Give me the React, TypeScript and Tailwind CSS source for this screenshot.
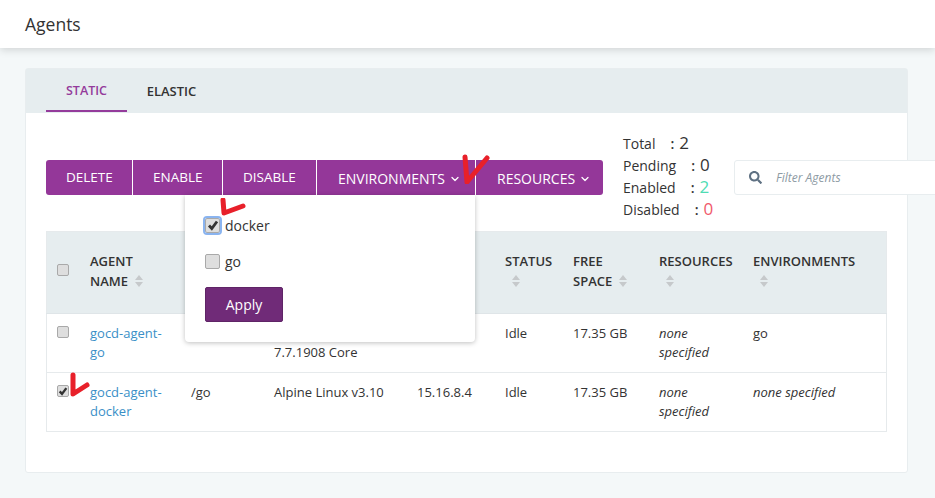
import React from 'react';
import { ChevronDown } from 'lucide-react';
import { FaSearch } from 'react-icons/fa';

const font = { fontFamily: '"Open Sans", sans-serif' };

const SortIcon = () => (
    <svg viewBox="0 0 8 12" className="inline-block w-[8px] h-[12px] ml-[7px] align-[-1px]">
        <path d="M4 0 L8 5 H0 Z M0 7 H8 L4 12 Z" fill="#c6c9cb" />
    </svg>
);

const Checkbox = ({ checked, size = 'sm', focus }: { checked?: boolean; size?: 'sm' | 'lg'; focus?: boolean }) => (
    <span
        className={`relative inline-flex items-center justify-center border border-[#a9a9a9] rounded-[2px] bg-[#dedede] ${size === 'lg' ? 'w-[15px] h-[15px]' : 'w-[12px] h-[12px]'} ${focus ? 'outline-2 outline-[#8ab4f0]' : ''}`}
    >
        {checked && (
            <svg viewBox="0 0 12 12" className={size === 'lg' ? 'w-[12px] h-[12px]' : 'w-[10px] h-[10px]'}>
                <path d="M2 6.5 L4.8 9.5 L10 2.5" fill="none" stroke="#333" strokeWidth="2.8" />
            </svg>
        )}
    </span>
);

const RedMark = ({ className, d }: { className: string; d: string }) => (
    <svg viewBox="0 0 30 30" className={`absolute ${className}`}>
        <path d={d} fill="none" stroke="#e8202a" strokeWidth="5" strokeLinecap="round" strokeLinejoin="round" />
    </svg>
);

const Button = ({ label, className }: { label: string; className: string }) => (
    <button className={`flex items-center pl-[20px] h-full text-white text-[13.5px] ${className}`}>
        {label}
    </button>
);

const CaretButton = ({ label, className }: { label: string; className: string }) => (
    <button className={`flex items-center pl-[21px] pt-[2px] h-full text-white text-[14px] ${className}`}>
        {label}
        <ChevronDown className="w-[12px] h-[12px] ml-[4px]" strokeWidth={2.5} />
    </button>
);

const Stat = ({ label, value, color }: { label: string; value: string; color: string }) => (
    <div className="h-[22px] flex items-center text-[14px] text-[#333]">
        <span>{label}</span>
        <span className="ml-[15px] mr-[5px] text-[14px] font-semibold">:</span>
        <span className={`text-[17px] ${color}`}>{value}</span>
    </div>
);

const th = 'align-top text-left pt-[19px] pl-[12.5px] pr-0 font-semibold text-[13px] leading-[20px] text-[#333]';
const td = 'align-top text-left pt-[10px] pl-[12.5px] pr-0 text-[13px] leading-[19px]';

const rows = [
    { name: 'gocd-agent-go', sandbox: '', os: ['', '7.7.1908 Core'], ip: '', env: 'go', checked: false },
    { name: 'gocd-agent-docker', sandbox: '/go', os: ['Alpine Linux v3.10'], ip: '15.16.8.4', env: '', checked: true },
];

const App: React.FC = () => {
    return (
        <div className="relative h-screen overflow-hidden bg-[#f4f8f9]" style={font}>
            {/* Header */}
            <div className="h-[48px] bg-white shadow-[0_2px_8px_rgba(0,0,0,0.15)] flex items-center pl-[25px] text-[17.5px] text-[#333]">
                Agents
            </div>

            {/* Panel */}
            <div className="mt-[20px] mx-[25px] h-[405px] w-[883px] bg-white border border-[#e8edef] rounded-[3px]">
                <div className="h-[44px] bg-[#e6edef] flex pl-[20px]">
                    <div className="w-[81px] h-[43px] pt-[3px] border-b-2 border-[#943b9b] flex items-center justify-center text-[12.5px] font-semibold text-[#943b9b]">
                        STATIC
                    </div>
                    <div className="w-[89px] h-[43px] pt-[3px] flex items-center justify-center text-[13px] font-semibold text-[#333]">
                        ELASTIC
                    </div>
                </div>

                <div className="px-[20px]">
                    {/* Toolbar */}
                    <div className="relative flex items-start h-[118px]">
                        <div className="mt-[47px] flex h-[35px] w-[557px] rounded-[3px] bg-[#943799] shrink-0 overflow-hidden">
                            <Button label="DELETE" className="w-[87px] border-r border-white" />
                            <Button label="ENABLE" className="w-[90px] border-r border-white" />
                            <Button label="DISABLE" className="w-[94px] border-r border-white" />
                            <CaretButton label="ENVIRONMENTS" className="w-[159px] border-r border-white" />
                            <CaretButton label="RESOURCES" className="w-[127px]" />
                        </div>
                        <div className="ml-[20px] mt-[19px] w-[111px] shrink-0">
                            <Stat label="Total" value="2" color="text-[#333]" />
                            <Stat label="Pending" value="0" color="text-[#333]" />
                            <Stat label="Enabled" value="2" color="text-[#4fdcb4]" />
                            <Stat label="Disabled" value="0" color="text-[#f0596b]" />
                        </div>
                        <div className="mt-[47px] h-[35px] w-[300px] shrink-0 bg-white border border-[#e8edef] rounded-[3px] flex items-center pl-[14px]">
                            <FaSearch className="w-[13px] h-[13px] text-[#5f7183]" />
                            <span className="ml-[14px] pt-[1px] text-[12px] italic text-[#8d9aa3]">Filter Agents</span>
                        </div>
                    </div>

                    {/* Agents table */}
                    <table className="w-[841px] table-fixed border-collapse border border-[#e6eaec]">
                        <thead>
                            <tr className="h-[82px] bg-[#e6edef] border-b border-[#dfe5e8]">
                                <th className="w-[31px] align-middle pl-[10px] pb-[5px] text-left"><span className="flex"><Checkbox /></span></th>
                                <th className={`${th} w-[101px]`}>AGENT<br />NAME<SortIcon /></th>
                                <th className={`${th} w-[83px]`}></th>
                                <th className={`${th} w-[143px]`}></th>
                                <th className={`${th} w-[88px]`}></th>
                                <th className={`${th} w-[68px]`}>STATUS<br /><SortIcon /></th>
                                <th className={`${th} w-[86px]`}>FREE<br />SPACE<SortIcon /></th>
                                <th className={`${th} w-[94px]`}>RESOURCES<br /><SortIcon /></th>
                                <th className={th}>ENVIRONMENTS<br /><SortIcon /></th>
                            </tr>
                        </thead>
                        <tbody className="text-[#333]">
                            {rows.map((row) => (
                                <tr key={row.name} className="h-[59px] border-b border-[#e6eaec]">
                                    <td className="align-top pt-[12px] pl-[10px]"><span className="flex"><Checkbox checked={row.checked} /></span></td>
                                    <td className={`${td} pr-[13px] text-[#3a8fc7]`}>{row.name}</td>
                                    <td className={td}>{row.sandbox}</td>
                                    <td className={td}>
                                        {row.os.map((line, i) => (
                                            <div key={i} className="min-h-[19px]">{line}</div>
                                        ))}
                                    </td>
                                    <td className={td}>{row.ip}</td>
                                    <td className={td}>Idle</td>
                                    <td className={td}>17.35 GB</td>
                                    <td className={`${td} italic`}>none specified</td>
                                    <td className={`${td} ${row.env ? '' : 'italic'}`}>{row.env || 'none specified'}</td>
                                </tr>
                            ))}
                        </tbody>
                    </table>
                </div>
            </div>

            {/* Environments dropdown */}
            <div className="absolute left-[185px] top-[195px] w-[290px] h-[147px] bg-white rounded-b-[4px] shadow-[0_1px_5px_rgba(0,0,0,0.25)] px-[20px] pt-[22px]">
                <div className="flex items-center h-[16px] text-[14px] text-[#333]">
                    <Checkbox checked size="lg" focus />
                    <span className="ml-[5px]">docker</span>
                </div>
                <div className="flex items-center h-[16px] mt-[20px] text-[14px] text-[#333]">
                    <Checkbox size="lg" />
                    <span className="ml-[5px]">go</span>
                </div>
                <button className="mt-[18px] w-[78px] h-[35px] bg-[#702b78] border border-[#5f2466] rounded-[2px] text-white text-[14px]">
                    Apply
                </button>
            </div>

            {/* Hand-drawn red ticks */}
            <RedMark className="left-[218px] top-[198px] w-[30px] h-[30px]" d="M5 2 L6 15 L25 8" />
            <RedMark className="left-[461px] top-[154px] w-[30px] h-[30px]" d="M4 3 L6 28 L26 4" />
            <RedMark className="left-[68px] top-[372px] w-[30px] h-[30px]" d="M5 3 L5 22 L19 13" />
        </div>
    );
};

export default App;
